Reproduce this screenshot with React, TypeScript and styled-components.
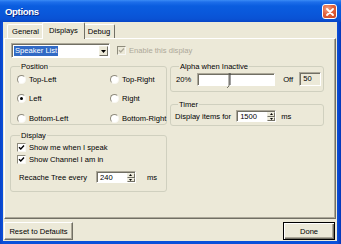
import React from "react";
import styled, { createGlobalStyle } from "styled-components";

const Global = createGlobalStyle`
  html, body { margin: 0; padding: 0; }
  body {
    width: 341px; height: 244px; overflow: hidden;
    font-family: "Liberation Sans", Arial, sans-serif;
    background: #0A4CD4;
  }
`;

const FONT = `font-family: "Liberation Sans", Arial, sans-serif; font-size: 7.6px; line-height: 9px; color: #000;`;

const Win = styled.div`
  width: 341px;
  height: 244px;
  display: flex;
  flex-direction: column;
  background: linear-gradient(to right, #0B43C6 0, #0A50DA 3px, #0A50DA 337px, #0737B8 341px);
`;

const TitleBar = styled.div`
  height: 22px;
  flex: none;
  display: flex;
  align-items: center;
  justify-content: space-between;
  padding: 0 4px 0 5px;
  background: linear-gradient(
    to bottom,
    #3B8CF5 0,
    #1E6FEA 2px,
    #0A5DDF 6px,
    #0A57DA 14px,
    #0A52D4 19px,
    #0845C6 22px
  );
`;

const Title = styled.span`
  color: #fff;
  font-family: "Liberation Sans", Arial, sans-serif;
  font-weight: bold;
  font-size: 9.6px;
  letter-spacing: -0.35px;
  text-shadow: 1px 1px 0 #0A2A8A;
  margin-top: 1px;
`;

const CloseBtn = styled.div`
  width: 15px;
  height: 15px;
  box-sizing: border-box;
  border: 1px solid #fff;
  border-radius: 3px;
  background: radial-gradient(circle at 35% 30%, #F3A487 0, #E3643E 45%, #C8421C 100%);
  display: flex;
  align-items: center;
  justify-content: center;
  margin-top: 1px;
`;

const Body = styled.div`
  flex: 1;
  margin: 0 4px 3px 3px;
  background: #ECE9D8;
  display: flex;
  flex-direction: column;
  padding: 0 1px 1px 1px;
  min-height: 0;
`;

const TabStrip = styled.div`
  height: 16px;
  flex: none;
  display: flex;
  align-items: flex-end;
  padding-left: 3px;
  position: relative;
  z-index: 1;
`;

const Tab = styled.div<{ $active?: boolean }>`
  ${FONT}
  height: ${(p) => (p.$active ? 17 : 14)}px;
  margin: 0 ${(p) => (p.$active ? -2 : 0)}px ${(p) => (p.$active ? -1 : 0)}px;
  padding: 0 ${(p) => (p.$active ? 6 : 4)}px ${(p) => (p.$active ? 2 : 0)}px;
  box-sizing: border-box;
  border-top: 1px solid #fff;
  border-left: 1px solid #fff;
  border-right: 1px solid #716F64;
  border-radius: 2px 2px 0 0;
  background: #ECE9D8;
  display: flex;
  align-items: center;
  position: relative;
  z-index: ${(p) => (p.$active ? 2 : 1)};
`;

const Panel = styled.div`
  flex: 1;
  box-sizing: border-box;
  border: 1px solid;
  border-color: #fff #716F64 #716F64 #fff;
  box-shadow: inset -1px -1px 0 #ACA899;
  background: #ECE9D8;
  padding: 4px 5px 0 5px;
  display: flex;
  flex-direction: column;
`;

const TopRow = styled.div`
  display: flex;
  align-items: center;
  height: 15px;
  margin-left: 1px;
  gap: 7px;
`;

const Combo = styled.div`
  width: 99px;
  height: 15px;
  box-sizing: border-box;
  border: 1px solid;
  border-color: #ACA899 #fff #fff #ACA899;
  box-shadow: inset 1px 1px 0 #716F64;
  background: #fff;
  display: flex;
  align-items: stretch;
  padding: 2px 1px 1px 2px;
`;

const ComboText = styled.div`
  flex: 1;
  display: flex;
  align-items: center;
`;

const Selected = styled.span`
  ${FONT}
  color: #fff;
  background: #316AC5;
  padding: 0 1px;
  line-height: 10px;
`;

const ComboBtn = styled.div`
  width: 9px;
  box-sizing: border-box;
  background: #ECE9D8;
  border: 1px solid;
  border-color: #F1EFE2 #716F64 #716F64 #F1EFE2;
  display: flex;
  align-items: center;
  justify-content: center;
`;

const CheckRow = styled.label<{ $disabled?: boolean }>`
  ${FONT}
  display: flex;
  align-items: center;
  gap: 3px;
  color: ${(p) => (p.$disabled ? "#ACA899" : "#000")};
`;

const CheckBox = styled.span<{ $disabled?: boolean }>`
  width: 9px;
  height: 9px;
  box-sizing: border-box;
  flex: none;
  background: ${(p) => (p.$disabled ? "#ECE9D8" : "#fff")};
  border: 1px solid;
  border-color: #8E8B7C #F8F7F2 #F8F7F2 #8E8B7C;
  display: inline-flex;
  align-items: center;
  justify-content: center;
`;

const Columns = styled.div`
  display: grid;
  grid-template-columns: 157px 154px;
  column-gap: 3px;
  margin-top: 4px;
  align-items: start;
`;

const Col = styled.div<{ $gap: number }>`
  display: flex;
  flex-direction: column;
  gap: ${(p) => p.$gap}px;
`;

const Group = styled.fieldset<{ $pad: string }>`
  margin: 0;
  min-width: 0;
  border: 1px solid #D0D0BF;
  border-radius: 3px;
  padding: ${(p) => p.$pad};
`;

const Legend = styled.legend`
  ${FONT}
  padding: 0 1px;
  margin-left: 3px;
`;

const RadioGrid = styled.div`
  display: grid;
  grid-template-columns: 93px auto;
  grid-auto-rows: 12px;
  row-gap: 7.5px;
`;

const RadioRow = styled.label`
  ${FONT}
  display: flex;
  align-items: center;
  gap: 3px;
  white-space: nowrap;
`;

const RadioCircle = styled.span<{ $checked?: boolean }>`
  width: 9px;
  height: 9px;
  box-sizing: border-box;
  flex: none;
  border-radius: 50%;
  background: #fff;
  border: 1px solid;
  border-color: #8E8B7C #F8F7F2 #F8F7F2 #8E8B7C;
  display: inline-flex;
  align-items: center;
  justify-content: center;
  &::after {
    content: "";
    width: 3px;
    height: 3px;
    border-radius: 50%;
    background: ${(p) => (p.$checked ? "#000" : "transparent")};
  }
`;

const CheckList = styled.div`
  display: flex;
  flex-direction: column;
  gap: 3px;
`;

const FieldRow = styled.div<{ $gap: number; $mt?: number }>`
  ${FONT}
  display: flex;
  align-items: center;
  gap: ${(p) => p.$gap}px;
  margin-top: ${(p) => p.$mt ?? 0}px;
  white-space: nowrap;
`;

const Indented = styled.span`
  margin-left: 2px;
`;

const Spin = styled.div<{ $w: number }>`
  width: ${(p) => p.$w}px;
  height: 12px;
  box-sizing: border-box;
  display: flex;
  background: #fff;
  border: 1px solid;
  border-color: #ACA899 #fff #fff #ACA899;
  box-shadow: inset 1px 1px 0 #716F64;
  padding: 1px 0 0 1px;
`;

const SpinText = styled.span`
  ${FONT}
  flex: 1;
  padding-left: 2px;
  line-height: 9px;
`;

const SpinBtns = styled.div`
  width: 8px;
  display: flex;
  flex-direction: column;
`;

const SpinBtn = styled.span`
  flex: 1;
  box-sizing: border-box;
  background: #ECE9D8;
  border: 1px solid;
  border-color: #F1EFE2 #716F64 #716F64 #F1EFE2;
  display: flex;
  align-items: center;
  justify-content: center;
`;

const Track = styled.div`
  width: 78px;
  height: 13px;
  box-sizing: border-box;
  background: #fff;
  border: 1px solid;
  border-color: #ACA899 #fff #fff #ACA899;
  box-shadow: inset 1px 1px 0 #716F64;
  position: relative;
`;

const Thumb = styled.svg`
  position: absolute;
  top: 0;
  width: 5px;
  height: 14px;
  overflow: visible;
`;

const EditBox = styled.div`
  ${FONT}
  width: 22px;
  height: 14px;
  box-sizing: border-box;
  border: 1px solid;
  border-color: #ACA899 #fff #fff #ACA899;
  box-shadow: inset 1px 1px 0 #716F64;
  background: #ECE9D8;
  padding: 1px 0 0 3px;
`;

const ButtonRow = styled.div`
  display: flex;
  justify-content: space-between;
  margin-top: 3px;
  height: 18px;
  flex: none;
  padding-right: 1px;
`;

const Button = styled.button<{ $default?: boolean; $w: number }>`
  ${FONT}
  width: ${(p) => p.$w}px;
  height: 18px;
  box-sizing: border-box;
  padding: 0;
  background: #ECE9D8;
  border: 1px solid;
  border-color: ${(p) => (p.$default ? "#000" : "#fff #716F64 #716F64 #fff")};
  box-shadow: ${(p) =>
    p.$default
      ? "inset 1px 1px 0 #fff, inset -1px -1px 0 #716F64, inset -2px -2px 0 #ACA899"
      : "inset -1px -1px 0 #ACA899"};
  display: flex;
  align-items: center;
  justify-content: center;
`;

const Down = () => (
  <svg width="5" height="3" viewBox="0 0 5 3">
    <path d="M0 0 H5 L2.5 3 Z" fill="#000" />
  </svg>
);

const SmallTri = ({ up }: { up?: boolean }) => (
  <svg width="3" height="2" viewBox="0 0 3 2">
    <path d={up ? "M0 2 H3 L1.5 0 Z" : "M0 0 H3 L1.5 2 Z"} fill="#000" />
  </svg>
);

const Check = ({ color }: { color: string }) => (
  <svg width="7" height="7" viewBox="0 0 7 7">
    <path d="M1 3.2 L2.8 5 L6 1.6" stroke={color} strokeWidth="1.4" fill="none" />
  </svg>
);

const Radio = ({ label, checked }: { label: string; checked?: boolean }) => (
  <RadioRow>
    <RadioCircle $checked={checked} />
    {label}
  </RadioRow>
);

const SpinBox = ({ value, w }: { value: string; w: number }) => (
  <Spin $w={w}>
    <SpinText>{value}</SpinText>
    <SpinBtns>
      <SpinBtn>
        <SmallTri up />
      </SpinBtn>
      <SpinBtn>
        <SmallTri />
      </SpinBtn>
    </SpinBtns>
  </Spin>
);

export default function App() {
  const alpha = 0.39;
  return (
    <Win>
      <Global />
      <TitleBar>
        <Title>Options</Title>
        <CloseBtn>
          <svg width="8" height="8" viewBox="0 0 8 8">
            <path d="M1 1 L7 7 M7 1 L1 7" stroke="#fff" strokeWidth="1.8" strokeLinecap="round" />
          </svg>
        </CloseBtn>
      </TitleBar>
      <Body>
        <TabStrip>
          <Tab>General</Tab>
          <Tab $active>Displays</Tab>
          <Tab>Debug</Tab>
        </TabStrip>
        <Panel>
          <TopRow>
            <Combo>
              <ComboText>
                <Selected>Speaker List</Selected>
              </ComboText>
              <ComboBtn>
                <Down />
              </ComboBtn>
            </Combo>
            <CheckRow $disabled>
              <CheckBox $disabled>
                <Check color="#ACA899" />
              </CheckBox>
              Enable this display
            </CheckRow>
          </TopRow>
          <Columns>
            <Col $gap={6}>
              <Group $pad="2px 0 0 6px">
                <Legend>Position</Legend>
                <RadioGrid>
                  <Radio label="Top-Left" />
                  <Radio label="Top-Right" />
                  <Radio label="Left" checked />
                  <Radio label="Right" />
                  <Radio label="Bottom-Left" />
                  <Radio label="Bottom-Right" />
                </RadioGrid>
              </Group>
              <Group $pad="3px 0 8px 6px">
                <Legend>Display</Legend>
                <CheckList>
                  <CheckRow>
                    <CheckBox>
                      <Check color="#000" />
                    </CheckBox>
                    Show me when I speak
                  </CheckRow>
                  <CheckRow>
                    <CheckBox>
                      <Check color="#000" />
                    </CheckBox>
                    Show Channel I am in
                  </CheckRow>
                </CheckList>
                <FieldRow $gap={9} $mt={7}>
                  <Indented>Recache Tree every</Indented>
                  <SpinBox value="240" w={40} />
                  <Indented>ms</Indented>
                </FieldRow>
              </Group>
            </Col>
            <Col $gap={8}>
              <Group $pad="1px 0 5px 5px">
                <Legend>Alpha when Inactive</Legend>
                <FieldRow $gap={6}>
                  <span>20%</span>
                  <Track>
                    <Thumb style={{ left: `${alpha * 100}%` }} viewBox="0 0 5 14">
                      <path d="M1 -1 V12 L-1 14" stroke="#716F64" strokeWidth="1" fill="none" />
                      <path d="M2 -1 V11" stroke="#404040" strokeWidth="1" fill="none" />
                    </Thumb>
                  </Track>
                  <Indented>Off</Indented>
                  <EditBox>50</EditBox>
                </FieldRow>
              </Group>
              <Group $pad="1px 0 3px 4px">
                <Legend>Timer</Legend>
                <FieldRow $gap={5}>
                  <span>Display items for</span>
                  <SpinBox value="1500" w={40} />
                  <span>ms</span>
                </FieldRow>
              </Group>
            </Col>
          </Columns>
        </Panel>
        <ButtonRow>
          <Button $w={69}>Reset to Defaults</Button>
          <Button $w={52} $default>
            Done
          </Button>
        </ButtonRow>
      </Body>
    </Win>
  );
}
